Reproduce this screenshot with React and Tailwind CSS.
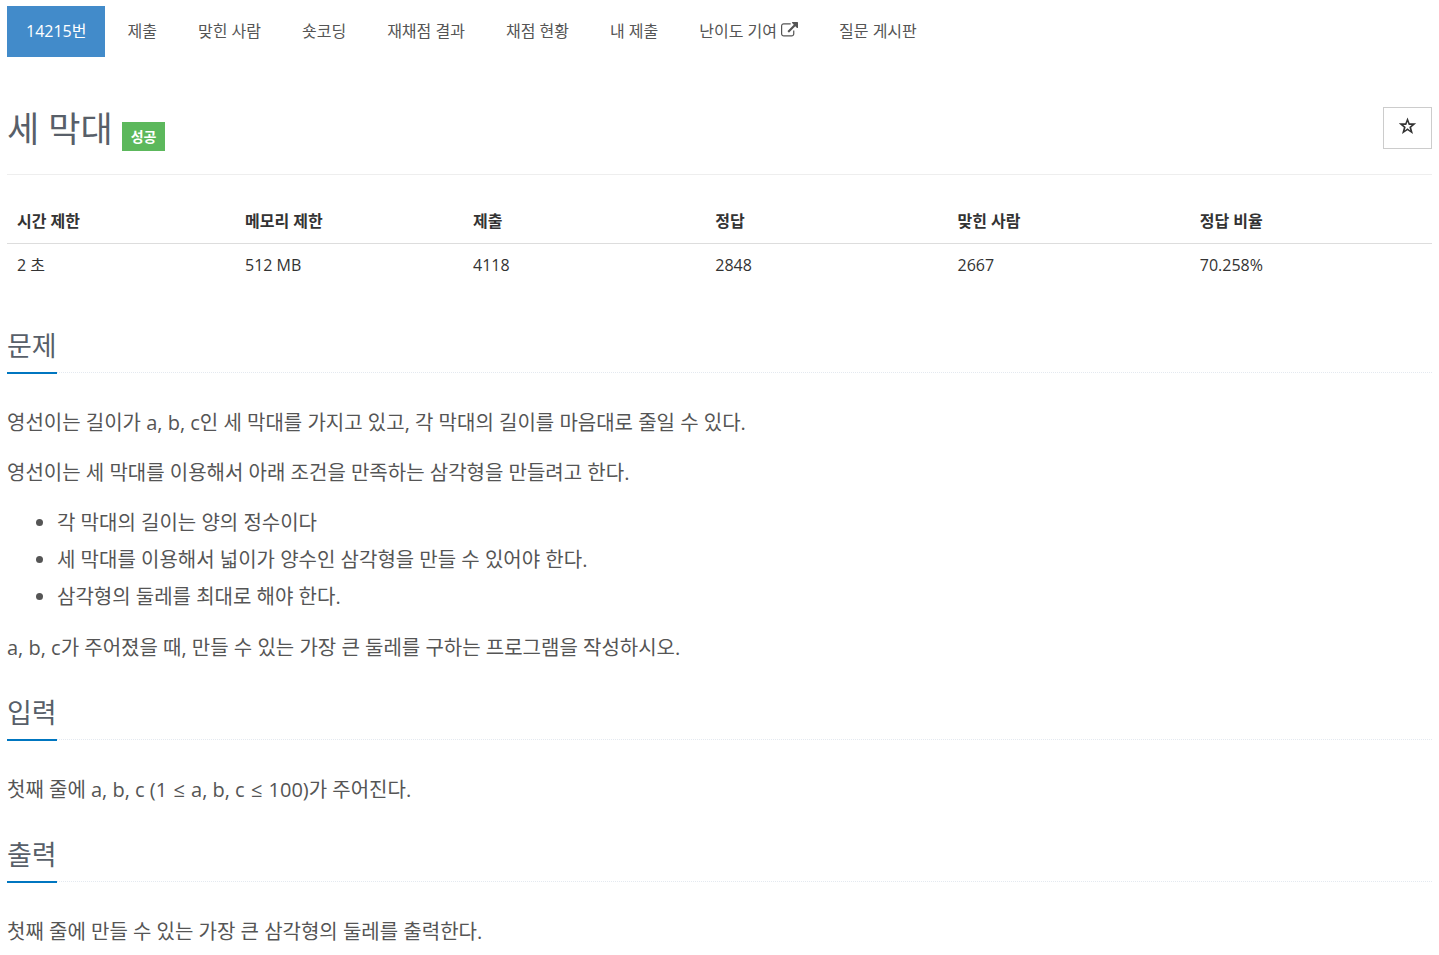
const MENU = [
  { label: '14215번', active: true },
  { label: '제출' },
  { label: '맞힌 사람' },
  { label: '숏코딩' },
  { label: '재채점 결과' },
  { label: '채점 현황' },
  { label: '내 제출' },
  { label: '난이도 기여', external: true },
  { label: '질문 게시판' },
];

const LIMITS = [
  { label: '시간 제한', value: '2 초', width: 'w-[16%]' },
  { label: '메모리 제한', value: '512 MB', width: 'w-[16%]' },
  { label: '제출', value: '4118', width: 'w-[17%]' },
  { label: '정답', value: '2848', width: 'w-[17%]' },
  { label: '맞힌 사람', value: '2667', width: 'w-[17%]' },
  { label: '정답 비율', value: '70.258%', width: 'w-[17%]' },
];

const ExternalIcon = () => (
  <svg viewBox="0 0 1792 1792" className="inline-block size-[17px] ml-1 align-[-2px]" fill="currentColor" aria-hidden="true">
    <path d="M1408 928v320q0 119-84.500 203.500t-203.500 84.500h-832q-119 0-203.500-84.500t-84.500-203.500v-832q0-119 84.500-203.500t203.500-84.500h704q14 0 23 9t9 23v64q0 14-9 23t-23 9h-704q-66 0-113 47t-47 113v832q0 66 47 113t113 47h832q66 0 113-47t47-113v-320q0-14 9-23t23-9h64q14 0 23 9t9 23zm384-864v512q0 26-19 45t-45 19-45-19l-176-176-652 652q-10 10-23 10t-23-10l-114-114q-10-10-10-23t10-23l652-652-176-176q-19-19-19-45t19-45 45-19h512q26 0 45 19t19 45z" />
  </svg>
);

const ProblemMenu = () => (
  <nav>
    <ul className="flex flex-wrap gap-[3px]">
      {MENU.map(({ label, active, external }) => (
        <li key={label}>
          <a
            href="#"
            className={`block px-[19px] pt-[13px] pb-[14px] leading-6 ${active ? 'bg-[#428bca] text-white' : 'text-[#555]'}`}
          >
            {label}
            {external && <ExternalIcon />}
          </a>
        </li>
      ))}
    </ul>
  </nav>
);

const Section = ({ title, children }) => (
  <section className="mb-[29px]">
    <div className="border-b border-dotted border-[#e4e9f0] mb-[31px]">
      <h2 className="inline-block align-top -mb-[2px] pb-2 border-b-2 border-[#0076c0] text-[27px] leading-[36px] text-[#585f69]">
        {title}
      </h2>
    </div>
    <div className="flex flex-col gap-[13px] text-[20px] leading-[37px] text-[#555]">{children}</div>
  </section>
);

const LessOrEqual = () => <span className="mx-px">≤</span>;

const App = () => (
  <div className="px-[7px] pt-[6px] text-[16px] text-[#333] font-['Open_Sans','Noto_Sans_CJK_KR',sans-serif]">
    <ProblemMenu />

    <header className="flex justify-between items-start mt-[50px] pb-[23px] border-b border-[#eee]">
      <div className="flex items-end gap-[9px]">
        <h1 className="text-[35px] leading-[44px] text-[#585f69]">세 막대</h1>
        <span className="bg-[#5cb85c] px-[9px] py-1 text-[14px] leading-[21px] font-bold text-white">성공</span>
      </div>
      <button type="button" aria-label="즐겨찾기" className="flex justify-center w-[49px] h-[42px] pt-[9px] border border-[#ccc] text-[#333]">
        <svg viewBox="0 0 18 18" className="size-[18px]" fill="currentColor" fillRule="evenodd" aria-hidden="true">
          <path d="M8.500 0.500L10.700 6.300H17.200L12.200 10.400L14 17L8.500 13.200L3 17L4.800 10.400L-0.200 6.300H6.300ZM8.500 4.800L7.300 8.100H4.300L6.700 10.100L5.700 13.400L8.500 11.300L11.300 13.400L10.300 10.100L12.700 8.100H9.700Z" />
        </svg>
      </button>
    </header>

    <table className="w-full table-fixed mt-[22px] mb-[42px] text-left">
      <thead>
        <tr className="border-b border-[#ddd]">
          {LIMITS.map(({ label, width }) => (
            <th key={label} className={`${width} px-[10px] pt-3 pb-[10px] leading-6 font-bold`}>{label}</th>
          ))}
        </tr>
      </thead>
      <tbody>
        <tr>
          {LIMITS.map(({ label, value }) => (
            <td key={label} className="px-[10px] py-[9px] leading-6">{value}</td>
          ))}
        </tr>
      </tbody>
    </table>

    <Section title="문제">
      <p>영선이는 길이가 a, b, c인 세 막대를 가지고 있고, 각 막대의 길이를 마음대로 줄일 수 있다.</p>
      <p>영선이는 세 막대를 이용해서 아래 조건을 만족하는 삼각형을 만들려고 한다.</p>
      <ul className="list-disc pl-[50px] pb-px">
        <li>각 막대의 길이는 양의 정수이다</li>
        <li>세 막대를 이용해서 넓이가 양수인 삼각형을 만들 수 있어야 한다.</li>
        <li>삼각형의 둘레를 최대로 해야 한다.</li>
      </ul>
      <p>a, b, c가 주어졌을 때, 만들 수 있는 가장 큰 둘레를 구하는 프로그램을 작성하시오.</p>
    </Section>

    <Section title="입력">
      <p>첫째 줄에 a, b, c (1 <LessOrEqual /> a, b, c <LessOrEqual /> 100)가 주어진다.</p>
    </Section>

    <Section title="출력">
      <p>첫째 줄에 만들 수 있는 가장 큰 삼각형의 둘레를 출력한다.</p>
    </Section>
  </div>
);

export default App;
